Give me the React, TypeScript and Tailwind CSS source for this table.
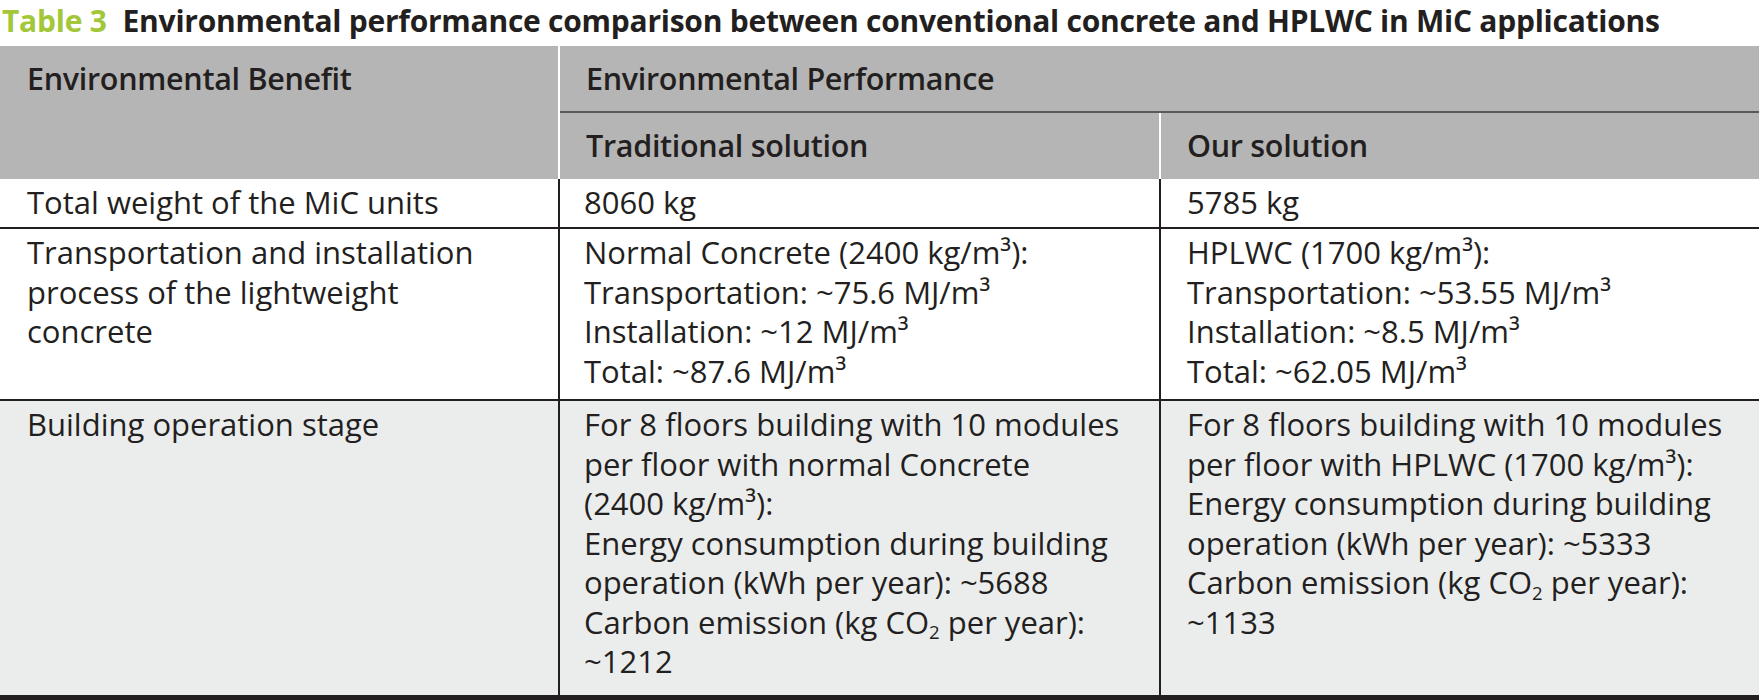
import React from 'react';

type Line = React.ReactNode;

const M3 = <>m³</>;

const CO2 = (
  <>
    CO<sub className="text-[0.6em] leading-none relative top-[0.3em] align-baseline">2</sub>
  </>
);

const rows: { benefit: Line[]; traditional: Line[]; ours: Line[]; shaded?: boolean; height: string }[] = [
  {
    benefit: ['Total weight of the MiC units'],
    traditional: ['8060 kg'],
    ours: ['5785 kg'],
    height: 'h-[50px]',
  },
  {
    benefit: ['Transportation and installation', 'process of the lightweight', 'concrete'],
    traditional: [
      <>Normal Concrete (2400 kg/{M3}):</>,
      <>Transportation: ~75.6 MJ/{M3}</>,
      <>Installation: ~12 MJ/{M3}</>,
      <>Total: ~87.6 MJ/{M3}</>,
    ],
    ours: [
      <>HPLWC (1700 kg/{M3}):</>,
      <>Transportation: ~53.55 MJ/{M3}</>,
      <>Installation: ~8.5 MJ/{M3}</>,
      <>Total: ~62.05 MJ/{M3}</>,
    ],
    height: 'h-[172px]',
  },
  {
    benefit: ['Building operation stage'],
    traditional: [
      'For 8 floors building with 10 modules',
      'per floor with normal Concrete',
      <>(2400 kg/{M3}):</>,
      'Energy consumption during building',
      'operation (kWh per year): ~5688',
      <>Carbon emission (kg {CO2} per year):</>,
      '~1212',
    ],
    ours: [
      'For 8 floors building with 10 modules',
      <>per floor with HPLWC (1700 kg/{M3}):</>,
      'Energy consumption during building',
      'operation (kWh per year): ~5333',
      <>Carbon emission (kg {CO2} per year):</>,
      '~1133',
    ],
    shaded: true,
    height: 'h-[299px]',
  },
];

const Lines = ({ lines }: { lines: Line[] }) => (
  <>
    {lines.map((l, i) => (
      <div key={i} className="whitespace-nowrap">
        {l}
      </div>
    ))}
  </>
);

export default function App() {
  return (
    <div className="w-[1761px] h-[700px] bg-white text-[#231f20] font-['Open_Sans',sans-serif] overflow-hidden">
      {/* Caption */}
      <div className="h-[46px] pl-[2px] text-[30px] leading-[41px] font-bold tracking-[-0.25px] whitespace-nowrap">
        <span className="text-[#a2c739] mr-[16px]">Table 3</span>
        Environmental performance comparison between conventional concrete and HPLWC in MiC applications
      </div>

      <table className="w-[1759px] table-fixed border-separate border-spacing-0 text-[31px] leading-[39.5px]">
        <colgroup>
          <col className="w-[560px]" />
          <col className="w-[601px]" />
          <col className="w-[598px]" />
        </colgroup>
        <thead className="bg-[#b5b5b5] text-[30.5px] tracking-[-0.3px]">
          <tr className="h-[67px]">
            <th rowSpan={2} className="align-top text-left font-semibold pl-[27px] pt-[13px] border-r-2 border-white">
              Environmental Benefit
            </th>
            <th colSpan={2} className="align-top text-left font-semibold pl-[26px] pt-[13px] border-b-2 border-[#58595b]">
              Environmental Performance
            </th>
          </tr>
          <tr className="h-[66px]">
            <th className="align-top text-left font-semibold pl-[26px] pt-[13px] border-r-2 border-white">
              Traditional solution
            </th>
            <th className="align-top text-left font-semibold pl-[26px] pt-[13px]">Our solution</th>
          </tr>
        </thead>
        <tbody>
          {rows.map((r, i) => {
            const last = i === rows.length - 1;
            const bottom = last ? 'border-b-[5px] border-b-[#231f20]' : 'border-b-2 border-b-[#231f20]';
            const bg = r.shaded ? 'bg-[#ebeded]' : 'bg-white';
            return (
              <tr key={i} className={r.height}>
                <td className={`align-top pl-[27px] pt-[4px] border-r-2 border-r-[#231f20] ${bottom} ${bg}`}>
                  <Lines lines={r.benefit} />
                </td>
                <td className={`align-top pl-[24px] pt-[4px] border-r-2 border-r-[#231f20] ${bottom} ${bg}`}>
                  <Lines lines={r.traditional} />
                </td>
                <td className={`align-top pl-[26px] pt-[4px] ${bottom} ${bg}`}>
                  <Lines lines={r.ours} />
                </td>
              </tr>
            );
          })}
        </tbody>
      </table>
    </div>
  );
}
